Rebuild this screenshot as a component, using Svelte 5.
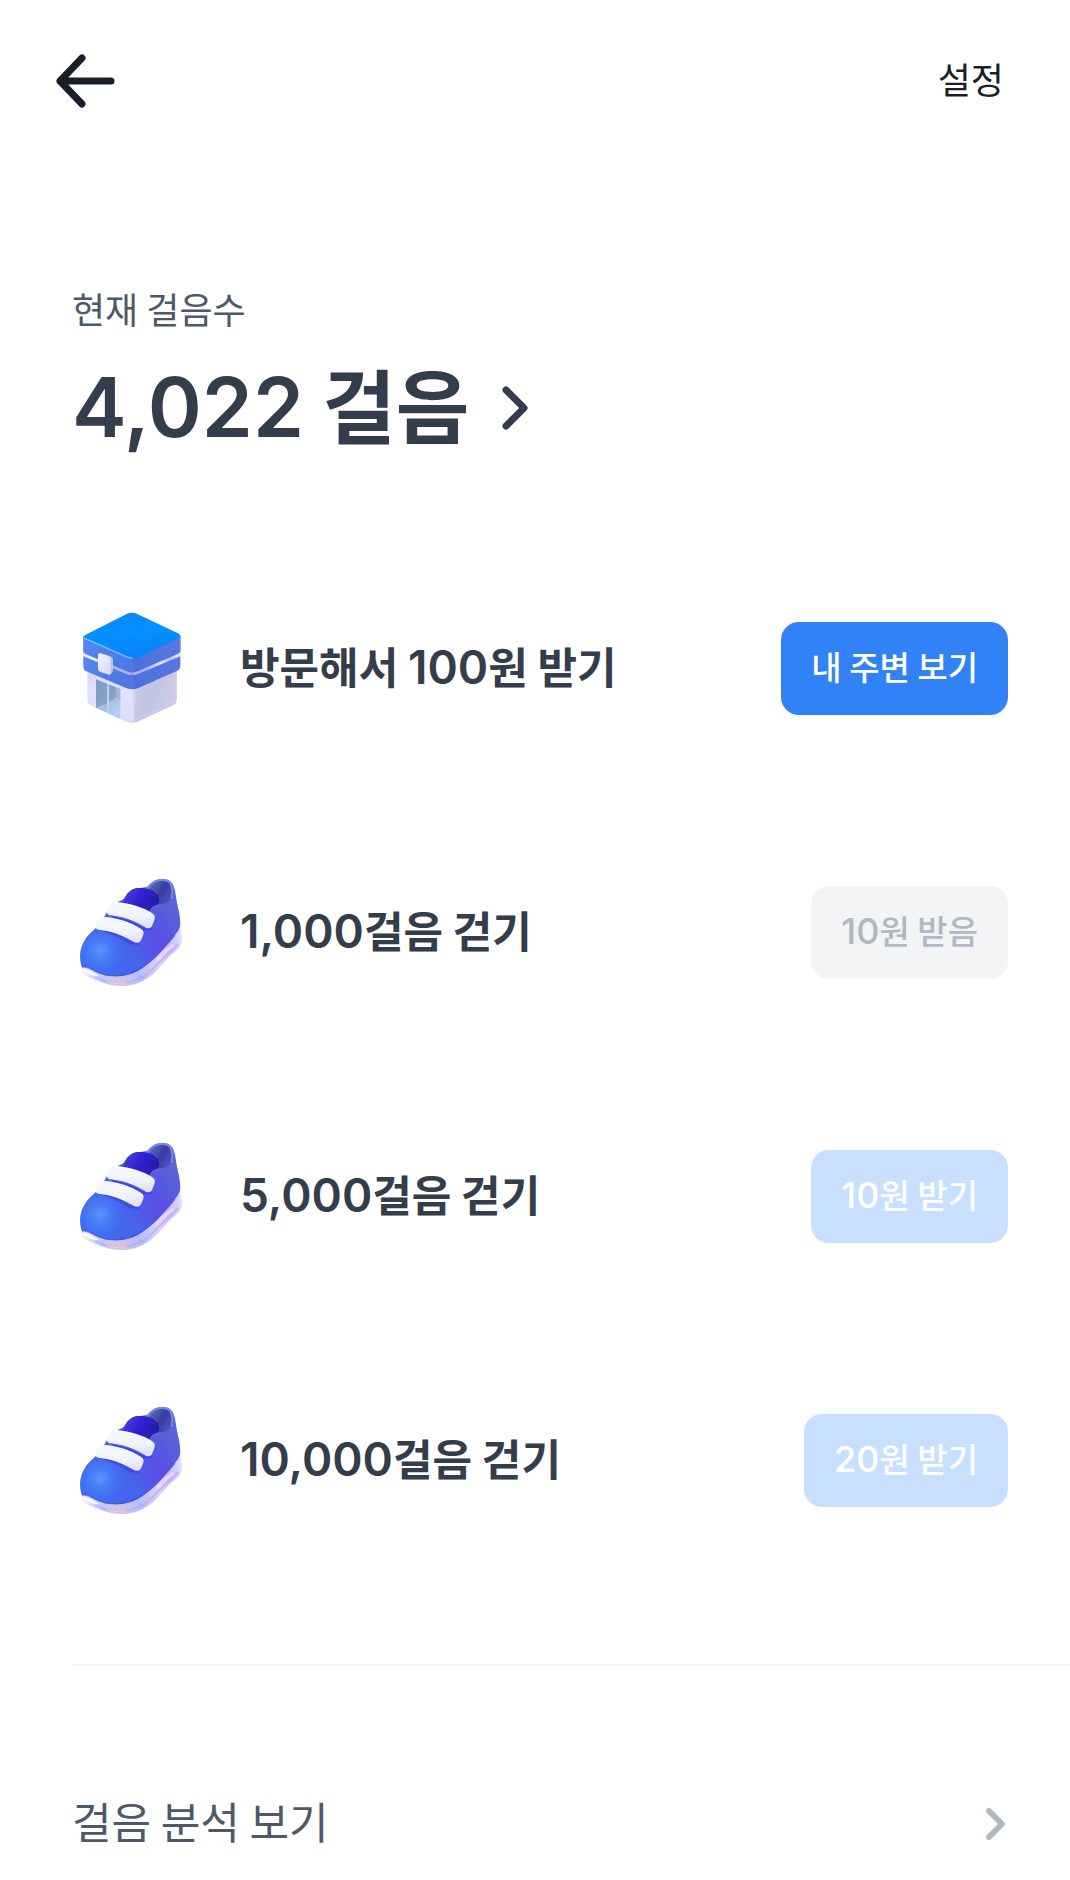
<script lang="ts">
  /**
   * Step Rewards Screen
   * Shows the current step count and the reward for each walking goal
   */

  type Mission = {
    icon: 'store' | 'shoe';
    title: string;
    action: string;
    state: 'active' | 'done' | 'locked';
  };

  const steps = 4022;

  const missions: Mission[] = [
    { icon: 'store', title: '방문해서 100원 받기', action: '내 주변 보기', state: 'active' },
    { icon: 'shoe', title: '1,000걸음 걷기', action: '10원 받음', state: 'done' },
    { icon: 'shoe', title: '5,000걸음 걷기', action: '10원 받기', state: 'locked' },
    { icon: 'shoe', title: '10,000걸음 걷기', action: '20원 받기', state: 'locked' },
  ];

  // Splits "100원 받기" into digit and text parts, digits use their own font
  function splitNumbers(text: string): string[] {
    return text.split(/([\d,]+)/).filter((part) => part !== '');
  }

  function isNumber(part: string): boolean {
    return /^\d/.test(part);
  }
</script>

<svelte:head>
  <title>만보기</title>
</svelte:head>

<!-- gradients shared by the mission icons -->
<svg class="defs" aria-hidden="true">
  <defs>
    <linearGradient id="roof" x1="0" y1="0" x2="0.3" y2="1">
      <stop offset="0" stop-color="#0a84fa" />
      <stop offset="0.5" stop-color="#0491ff" />
      <stop offset="1" stop-color="#0783f8" />
    </linearGradient>
    <linearGradient id="band-left" x1="0" y1="0" x2="1" y2="1">
      <stop offset="0" stop-color="#5688ee" />
      <stop offset="1" stop-color="#4c74e2" />
    </linearGradient>
    <linearGradient id="band-right" x1="0" y1="1" x2="1" y2="0">
      <stop offset="0" stop-color="#4c6ede" />
      <stop offset="1" stop-color="#5c78dd" />
    </linearGradient>
    <linearGradient id="stripe" gradientUnits="userSpaceOnUse" x1="70" y1="0" x2="360" y2="0">
      <stop offset="0" stop-color="#f1f4ff" />
      <stop offset="0.12" stop-color="#e4ecff" />
      <stop offset="0.3" stop-color="#a7bfff" />
      <stop offset="0.5" stop-color="#b3a6f6" />
      <stop offset="0.65" stop-color="#a3b5f8" />
      <stop offset="0.8" stop-color="#e6e5ff" />
      <stop offset="0.9" stop-color="#b4bffa" />
      <stop offset="1" stop-color="#f2f4ff" />
    </linearGradient>
    <linearGradient id="wall-left" x1="0" y1="0" x2="0" y2="1">
      <stop offset="0" stop-color="#d2d2f6" />
      <stop offset="0.4" stop-color="#e3e4fa" />
      <stop offset="1" stop-color="#dcdcfb" />
    </linearGradient>
    <linearGradient id="wall-right" x1="0" y1="0" x2="1" y2="0.4">
      <stop offset="0" stop-color="#cfcfee" />
      <stop offset="0.5" stop-color="#c1c5de" />
      <stop offset="1" stop-color="#cdcaea" />
    </linearGradient>
    <linearGradient id="door" x1="0" y1="0" x2="0.6" y2="1">
      <stop offset="0" stop-color="#8aa8cf" />
      <stop offset="0.5" stop-color="#9db9dc" />
      <stop offset="1" stop-color="#b4d0f3" />
    </linearGradient>
    <linearGradient id="sign" x1="0" y1="0" x2="1" y2="1">
      <stop offset="0" stop-color="#f3f3ff" />
      <stop offset="1" stop-color="#d6d8f5" />
    </linearGradient>

    <linearGradient id="body" gradientUnits="userSpaceOnUse" x1="90" y1="310" x2="350" y2="110">
      <stop offset="0" stop-color="#3d6cf0" />
      <stop offset="0.35" stop-color="#4763ec" />
      <stop offset="0.65" stop-color="#5054e2" />
      <stop offset="1" stop-color="#5c68d0" />
    </linearGradient>
    <radialGradient id="toe" gradientUnits="userSpaceOnUse" cx="120" cy="272" r="84">
      <stop offset="0" stop-color="#5b96fd" />
      <stop offset="0.45" stop-color="#4680f9" stop-opacity="0.65" />
      <stop offset="1" stop-color="#3f68ee" stop-opacity="0" />
    </radialGradient>
    <radialGradient id="side" gradientUnits="userSpaceOnUse" cx="300" cy="262" r="76">
      <stop offset="0" stop-color="#6a48e6" stop-opacity="0.6" />
      <stop offset="1" stop-color="#6a48e6" stop-opacity="0" />
    </radialGradient>
    <linearGradient id="tongue" gradientUnits="userSpaceOnUse" x1="200" y1="90" x2="290" y2="150">
      <stop offset="0" stop-color="#4641dc" />
      <stop offset="0.4" stop-color="#3020cf" />
      <stop offset="1" stop-color="#251ba9" />
    </linearGradient>
    <linearGradient id="opening" gradientUnits="userSpaceOnUse" x1="270" y1="80" x2="335" y2="120">
      <stop offset="0" stop-color="#5966bf" />
      <stop offset="0.5" stop-color="#383ca4" />
      <stop offset="1" stop-color="#5259bf" />
    </linearGradient>
    <linearGradient id="sole" gradientUnits="userSpaceOnUse" x1="65" y1="340" x2="365" y2="220">
      <stop offset="0" stop-color="#f3f3ff" />
      <stop offset="0.14" stop-color="#c3c9f6" />
      <stop offset="0.32" stop-color="#d3c4e6" />
      <stop offset="0.5" stop-color="#b5bcf7" />
      <stop offset="0.7" stop-color="#e0cffa" />
      <stop offset="0.85" stop-color="#c7b8fb" />
      <stop offset="1" stop-color="#e1e3ff" />
    </linearGradient>
    <linearGradient id="strap" x1="0" y1="0" x2="0.3" y2="1">
      <stop offset="0" stop-color="#f8f9fd" />
      <stop offset="0.7" stop-color="#f1f3fa" />
      <stop offset="1" stop-color="#e2e4f4" />
    </linearGradient>
  </defs>
</svg>

{#snippet storeIcon()}
  <svg class="mission-icon" viewBox="36 54 360 360" aria-hidden="true">
    <path d="M82 232 L218 286 V399 Q208 399 199 395 L94 347 Q82 341 82 331 Z" fill="url(#wall-left)" />
    <path d="M216 286 L350 232 V330 Q350 340 341 345 L235 394 Q226 399 216 399 Z" fill="url(#wall-right)" />
    <path d="M217 392 L340 339 Q348 335 348 326 V240" fill="none" stroke="#ddc3fb" stroke-width="4" />
    <path d="M218 294 V398" stroke="#e5e4ff" stroke-width="12" opacity="0.65" />
    <path d="M108 268 L181 297 V387 L108 353 Z" fill="url(#door)" />
    <path d="M108 268 L141 281 V341 L108 353 Z" fill="#718fb8" opacity="0.55" />
    <path d="M148 284 L168 292 V322 L148 337 Z" fill="#7289ae" opacity="0.55" />
    <path d="M168 292 L181 297 V331 L168 322 Z" fill="#b4adc5" opacity="0.7" />
    <path d="M144 282 V370" stroke="#b8d6f5" stroke-width="5" />

    <path d="M70 187 L216 245 V298 Q207 298 198 294 L79 244 Q70 240 70 230 Z" fill="url(#band-left)" />
    <path d="M216 245 L361 187 V228 Q361 238 352 242 L235 294 Q226 298 216 298 Z" fill="url(#band-right)" />
    <path d="M70 183 L199 238 Q216 245 234 238 L361 183 V199 L234 252 Q216 260 199 252 L70 199 Z" fill="url(#stripe)" />
    <path d="M69 139 L216 205 V247 Q207 247 198 243 L78 193 Q69 189 69 181 Z" fill="url(#band-left)" />
    <path d="M216 205 L362 136 V179 Q362 188 353 192 L235 243 Q226 247 216 247 Z" fill="url(#band-right)" />
    <path d="M71 180 V147 M360 180 V142" stroke="#91a3f5" stroke-width="3" opacity="0.7" />
    <path d="M200 72 Q216 64 232 72 L354 130 Q368 138 354 146 L234 202 Q216 210 199 203 L77 151 Q63 143 77 134 Z" fill="url(#roof)" />
    <path d="M73 145 L199 200 Q208 204 217 204" fill="none" stroke="#70b9ff" stroke-width="5" stroke-linecap="round" />
    <path d="M217 205 Q226 206 235 202 L353 146" fill="none" stroke="#2581ef" stroke-width="3" />
    <path d="M216 212 V292" stroke="#5b83ef" stroke-width="9" opacity="0.35" />

    <path d="M121 190 L149 198 Q159 201 159 210 V241 Q158 250 148 255 L124 246 Z" fill="#bdc4eb" />
    <path d="M120 190 L145 198 Q152 201 152 209 V246 Q152 256 143 253 L120 245 Q114 242 114 235 V196 Q114 188 120 190 Z" fill="url(#sign)" />
  </svg>
{/snippet}

{#snippet shoeIcon()}
  <svg class="mission-icon" viewBox="36 36 360 360" aria-hidden="true">
    <path d="M64 322 Q61 337 75 345 C104 361 139 377 184 378 C218 378 250 366 276 344 C304 321 321 292 350 270 Q367 256 366 232 L359 198 L290 270 L170 338 Z" fill="url(#sole)" />
    <path d="M105 352 C152 374 207 374 249 350 C293 321 314 280 354 254" fill="none" stroke="#9ba7f6" stroke-width="5" opacity="0.6" />
    <path d="M144 363 Q168 372 198 369" fill="none" stroke="#f0c8c6" stroke-width="7" stroke-linecap="round" opacity="0.8" />
    <path d="M297 296 Q311 275 337 258" fill="none" stroke="#f3d5f7" stroke-width="11" stroke-linecap="round" opacity="0.8" />

    <path d="M104 208 C122 190 139 160 155 132 C174 123 188 125 194 112 C204 94 219 84 241 84 L265 80 C277 59 305 53 325 60 C341 67 345 88 348 110 C352 139 361 161 361 190 C361 210 350 218 340 231 C307 270 276 308 234 332 C196 352 150 354 112 337 C93 328 80 317 66 322 C55 288 58 245 104 208 Z" fill="url(#body)" />
    <path d="M104 208 C122 190 139 160 155 132 C174 123 188 125 194 112 C204 94 219 84 241 84 L265 80 C277 59 305 53 325 60 C341 67 345 88 348 110 C352 139 361 161 361 190 C361 210 350 218 340 231 C307 270 276 308 234 332 C196 352 150 354 112 337 C93 328 80 317 66 322 C55 288 58 245 104 208 Z" fill="url(#side)" />
    <path d="M104 208 C122 190 139 160 155 132 C174 123 188 125 194 112 C204 94 219 84 241 84 L265 80 C277 59 305 53 325 60 C341 67 345 88 348 110 C352 139 361 161 361 190 C361 210 350 218 340 231 C307 270 276 308 234 332 C196 352 150 354 112 337 C93 328 80 317 66 322 C55 288 58 245 104 208 Z" fill="url(#toe)" />
    <path d="M66 322 C83 317 94 329 114 337 C151 353 196 350 232 331 C275 308 308 268 345 226" fill="none" stroke="#3f43d2" stroke-width="4" opacity="0.55" />
    <path d="M68 327 Q82 323 94 334 L118 347 Q103 350 91 343 L69 334 Z" fill="#f7f7ff" />

    <path d="M264 84 C277 64 306 56 322 65 C338 75 336 103 332 120 C323 132 313 137 301 137 L281 104 Z" fill="url(#opening)" />
    <path d="M263 84 C280 59 311 53 328 66 C342 80 338 106 333 127" fill="none" stroke="#7c87df" stroke-width="6" stroke-linecap="round" />
    <path d="M186 129 C200 107 209 85 233 84 C255 82 281 88 291 103 C302 117 299 137 287 139 C274 142 269 158 259 156 Z" fill="url(#tongue)" />
    <path d="M270 161 C274 143 285 137 299 137 C319 137 327 130 336 119" fill="none" stroke="#5f5edc" stroke-width="7" stroke-linecap="round" />

    <path d="M159 174 Q205 180 249 207 L273 207 M123 208 Q165 218 209 248 L235 251" fill="none" stroke="#302fc7" stroke-width="8" stroke-linecap="round" opacity="0.4" />
    <path d="M160 127 Q166 124 178 127 C213 132 248 141 277 160 Q287 167 284 178 L276 198 Q270 208 258 203 C225 183 189 169 149 166 Q137 163 142 151 Q147 136 160 127 Z" fill="url(#strap)" />
    <path d="M123 172 Q129 169 141 171 C178 176 213 187 244 207 Q253 214 250 224 L243 241 Q237 252 224 247 C190 226 156 213 115 209 Q103 206 107 195 Q112 180 123 172 Z" fill="url(#strap)" />
  </svg>
{/snippet}

{#snippet label(text: string)}
  {#each splitNumbers(text) as part}{#if isNumber(part)}<span class="number">{part}</span>{:else}{part}{/if}{/each}
{/snippet}

<main class="screen">
  <header class="top-bar">
    <button class="back" type="button" aria-label="뒤로">
      <svg viewBox="0 0 60 54" aria-hidden="true">
        <path d="M26 4 L4 27 L26 50 M4 27 H55" />
      </svg>
    </button>
    <button class="settings" type="button">설정</button>
  </header>

  <section class="summary">
    <p class="summary-label">현재 걸음수</p>
    <h1>
      <a class="summary-link" href="#steps">
        <span class="summary-value">{@render label(steps.toLocaleString('en-US') + ' 걸음')}</span>
        <svg viewBox="0 0 28 46" aria-hidden="true">
          <path d="M5 5 L23 23 L5 41" />
        </svg>
      </a>
    </h1>
  </section>

  <ul class="missions">
    {#each missions as mission}
      <li class="mission">
        {#if mission.icon === 'store'}
          {@render storeIcon()}
        {:else}
          {@render shoeIcon()}
        {/if}
        <span class="mission-title">{@render label(mission.title)}</span>
        <button class="action {mission.state}" type="button" disabled={mission.state !== 'active'}>
          {@render label(mission.action)}
        </button>
      </li>
    {/each}
  </ul>

  <a class="analysis" href="#analysis">
    <span>걸음 분석 보기</span>
    <svg viewBox="0 0 22 34" aria-hidden="true">
      <path d="M4 4 L17 17 L4 30" />
    </svg>
  </a>
</main>

<style>
  :global(body) {
    background: #fff;
  }

  .defs {
    position: absolute;
    width: 0;
    height: 0;
  }

  .screen {
    font-family: 'Noto Sans CJK KR', sans-serif;
    color: #333d4b;
  }

  button {
    border: 0;
    font-family: inherit;
    white-space: nowrap;
  }

  a {
    color: inherit;
    text-decoration: none;
  }

  svg {
    flex: none;
  }

  .top-bar {
    display: flex;
    align-items: center;
    justify-content: space-between;
    height: 162px;
    padding: 0 66px 0 56px;
  }

  .back,
  .settings {
    padding: 0;
    background: none;
    color: #191f28;
  }

  .back svg {
    display: block;
    width: 60px;
    height: 54px;
  }

  .back path,
  .summary-link path,
  .analysis path {
    fill: none;
    stroke: currentColor;
    stroke-linecap: round;
    stroke-linejoin: round;
    stroke-width: 7;
  }

  .settings {
    padding-bottom: 6px;
    font-size: 36px;
    line-height: 48px;
  }

  .summary {
    padding: 120px 72px 72px;
  }

  .summary-label {
    margin: 0;
    font-size: 36px;
    line-height: 52px;
    color: #4e5968;
  }

  h1 {
    margin: 18px 0 0;
    font-size: 80px;
    font-weight: 600;
    line-height: 112px;
  }

  .number {
    font-family: Inter, sans-serif;
    font-size: 46px;
    line-height: 1;
  }

  .summary-link {
    display: inline-flex;
    align-items: center;
    gap: 32px;
    vertical-align: top;
  }

  .summary-value {
    padding-bottom: 6px;
    margin-top: -6px;
  }

  .summary-value .number {
    font-size: 82px;
  }

  .summary-link svg {
    width: 28px;
    height: 46px;
  }

  .missions {
    margin: 0;
    padding: 0;
    list-style: none;
  }

  .mission {
    display: flex;
    align-items: center;
    height: 264px;
    padding: 0 62px 0 72px;
  }

  .mission-icon {
    width: 120px;
    height: 120px;
    margin-right: 48px;
  }

  .mission-title {
    flex: 1;
    padding-bottom: 6px;
    font-size: 43px;
    font-weight: 600;
    line-height: 64px;
  }

  .action {
    padding: 20px 30px 24px;
    border-radius: 18px;
    font-size: 33px;
    font-weight: 500;
    line-height: 49px;
  }

  .action .number {
    font-size: 36px;
  }

  .active {
    background: #3182f6;
    color: #fff;
  }

  .done {
    background: #f2f4f6;
    color: #b0b8c1;
  }

  .locked {
    background: #c9dfff;
    color: #fff;
  }

  .analysis {
    display: flex;
    align-items: center;
    justify-content: space-between;
    margin: 72px 0 0 72px;
    padding: 126px 63px 24px 0;
    border-top: 2px solid #f0f1f3;
    font-size: 43px;
    line-height: 64px;
    color: #4e5968;
  }

  .analysis span {
    padding-bottom: 4px;
    margin-top: -4px;
  }

  .analysis svg {
    width: 22px;
    height: 34px;
    color: #b0b8c1;
  }

  .analysis path {
    stroke-width: 6;
  }
</style>
